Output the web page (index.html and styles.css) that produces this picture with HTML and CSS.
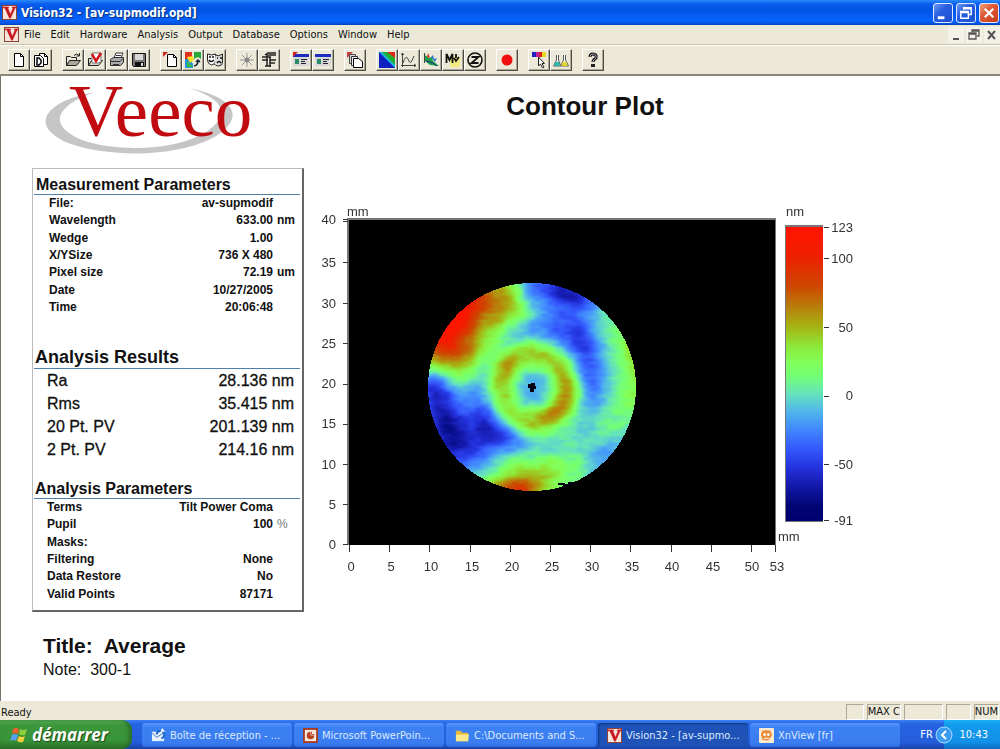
FILE: index.html
```html
<!DOCTYPE html>
<html lang="en">
<head>
  <meta charset="UTF-8">
  <title>Vision32 - [av-supmodif.opd]</title>
  <link rel="stylesheet" href="styles.css">
</head>
<body>

  <svg class="defs" width="0" height="0" aria-hidden="true">
    <symbol id="v-logo" viewBox="0 0 16 16">
      <rect width="16" height="16" fill="#8a3a2a"/>
      <rect x="1" y="1" width="14" height="14" fill="#f4e6dc"/>
      <path d="M1 2h6v1H6l3 7 3-7h-1V2h4v1h-1L9 14H8L3 3H1z" fill="#c8141c" stroke="#c8141c" stroke-width=".6"/>
    </symbol>
    <symbol id="page" viewBox="0 0 16 16">
      <path d="M3.5 1.5h6l3 3v10h-9z" fill="#fff" stroke="#000"/>
      <path d="M9.500 1.500v3h3" fill="none" stroke="#000"/>
    </symbol>
    <symbol id="window-list" viewBox="0 0 16 16">
      <rect x="0" y="2" width="16" height="12" fill="#d8d8d8"/>
      <rect x="0" y="2" width="16" height="3" fill="#1c2cc0"/>
      <rect x="2" y="7" width="4" height="5" fill="#2a8a6a"/>
      <path d="M8 7.500h6M8 9.500h4M8 11.500h5" stroke="#223"/>
    </symbol>
  </svg>

  <header class="titlebar">
    <svg class="app-icon"><use href="#v-logo"/></svg>
    <h1>Vision32 - [av-supmodif.opd]</h1>
    <div class="window-buttons">
      <button type="button" aria-label="Minimize"><svg viewBox="0 0 19 19"><path d="M4 13h7v3H4z" fill="#fff"/></svg></button>
      <button type="button" aria-label="Restore"><svg viewBox="0 0 19 19"><path d="M7 6V4h8v7h-3M7 5h8" fill="none" stroke="#fff" stroke-width="1.500"/><path d="M4 8h8v7H4zM4 9h8" fill="none" stroke="#fff" stroke-width="1.500"/></svg></button>
      <button type="button" class="close" aria-label="Close"><svg viewBox="0 0 19 19"><path d="M5 5l9 9M14 5l-9 9" stroke="#fff" stroke-width="2.300"/></svg></button>
    </div>
  </header>

  <nav class="menubar">
    <svg class="app-icon"><use href="#v-logo"/></svg>
    <button type="button">File</button>
    <button type="button">Edit</button>
    <button type="button">Hardware</button>
    <button type="button">Analysis</button>
    <button type="button">Output</button>
    <button type="button">Database</button>
    <button type="button">Options</button>
    <button type="button">Window</button>
    <button type="button">Help</button>
    <div class="doc-buttons">
      <button type="button" aria-label="Minimize document"><svg viewBox="0 0 16 16"><path d="M5 12h6" stroke="#555" stroke-width="2"/></svg></button>
      <button type="button" aria-label="Restore document"><svg viewBox="0 0 16 16"><path d="M6 5V3h7v6h-2M6 4h7M3 6h7v6H3zM3 7h7" fill="none" stroke="#555" stroke-width="1.300"/></svg></button>
      <button type="button" aria-label="Close document"><svg viewBox="0 0 16 16"><path d="M4 4l7 8M11 4l-7 8" stroke="#555" stroke-width="2"/></svg></button>
    </div>
  </nav>

  <div class="toolbar">
    <div class="group">
      <button type="button" aria-label="New"><svg><use href="#page"/></svg></button>
      <button type="button" aria-label="Duplicate"><svg viewBox="0 0 16 16"><path d="M6.500 1.500h5l3 3v8h-8z" fill="#fff" stroke="#000"/><path d="M11.500 1.500v3h3" fill="none" stroke="#000"/><path d="M1.500 3.500h6l3 3v8h-9z" fill="#fff" stroke="#000"/><path d="M4 6h2l2 2v3l-2 2H4z" fill="none" stroke="#000" stroke-width="1.500"/></svg></button>
    </div>
    <div class="group">
      <button type="button" aria-label="Open"><svg viewBox="0 0 16 16"><path d="M1.500 13.500v-9h4l1 1h5v3" fill="#e8e8dc" stroke="#222"/><path d="M1.500 13.500l3-5h11l-4 5z" fill="#a8a89c" stroke="#222"/><path d="M9 3.500q3-3 5 0M14.500 1v3h-3" fill="none" stroke="#222"/></svg></button>
      <button type="button" aria-label="Open dataset"><svg viewBox="0 0 16 16"><path d="M1.500 13.500v-7h3M1.500 13.500l3-5h11l-4 5z" fill="#d8d8cc" stroke="#222"/><path d="M5 1h9v9l-3 1H5z" fill="#fff" stroke="#777"/><path d="M5 2l4 7 5-8" fill="none" stroke="#d01418" stroke-width="2.500"/></svg></button>
      <button type="button" aria-label="Print"><svg viewBox="0 0 16 16"><path d="M5 6l2-5h7l-2 5" fill="#fff" stroke="#333"/><path d="M1.500 7.500l3-2h10v5l-3 3h-10z" fill="#aaa" stroke="#333"/><path d="M2 9.500h9l3-3M4 12.500h6M7 3.500h5" fill="none" stroke="#333"/></svg></button>
      <button type="button" aria-label="Save"><svg viewBox="0 0 16 16"><path d="M1.500 1.500h13v13h-12l-1-1z" fill="#777" stroke="#111"/><rect x="4" y="2" width="8" height="6" fill="#d8d8d8"/><rect x="4" y="10" width="9" height="4" fill="#111"/><rect x="10" y="11" width="2" height="3" fill="#ddd"/></svg></button>
    </div>
    <div class="group">
      <button type="button" aria-label="New measurement"><svg viewBox="0 0 16 16"><path d="M4.500 2.500h6l3 3v9h-9z" fill="#fff" stroke="#000"/><path d="M10.500 2.500v3h3" fill="none" stroke="#000"/><path d="M0 0h5L0 5z" fill="#d02020"/></svg></button>
      <button type="button" aria-label="Process data"><svg viewBox="0 0 16 16"><rect width="7" height="7" fill="#e03020"/><path d="M9 0h7v7l-3-2-4 2z" fill="#28a838"/><path d="M0 7h5l3 5v4H0z" fill="#2890d8"/><path d="M2 5l6-1 1 4-4 3z" fill="#f8e028"/><path d="M2 9l6 6H2z" fill="#30c040"/><path d="M9 14q4-1 4-5M11 10l2-2 2 2" fill="none" stroke="#123" stroke-width="1.500"/></svg></button>
      <button type="button" aria-label="Masks"><svg viewBox="0 0 16 16"><path d="M0.500 2q4 2 8 0v7q-1 4-4 4-4-1-4-5z" fill="#fff" stroke="#222"/><path d="M8.500 3q3 2 7-1v8q0 4-4 4-3 0-4-2" fill="#ddd" stroke="#222"/><path d="M2 5h2M5 5h2M2 8q2 3 5 0M10 6h1M13 6h2M10 11q2-3 4 0" stroke="#111" fill="none" stroke-width="1.500"/></svg></button>
    </div>
    <div class="group">
      <button type="button" aria-label="Intensity"><svg viewBox="0 0 16 16"><path d="M8 1v14M1 8h14M3 3l10 10M13 3L3 13" stroke="#999"/><circle cx="8" cy="8" r="2.500" fill="#888"/></svg></button>
      <button type="button" aria-label="Stage"><svg viewBox="0 0 16 16"><path d="M4 3l3-2h8M7 3h8M1 5h9M1 8h6M9 8h6M6 2v12M9 5v10M4 14h6M9 11h5" fill="none" stroke="#222" stroke-width="1.500"/></svg></button>
    </div>
    <div class="group">
      <button type="button" aria-label="Measurement options"><svg viewBox="0 0 16 16"><use href="#window-list"/><path d="M0 0h5L0 5z" fill="#d02020"/></svg></button>
      <button type="button" aria-label="Analysis options"><svg><use href="#window-list"/></svg></button>
    </div>
    <div class="group">
      <button type="button" aria-label="Copy plots"><svg viewBox="0 0 16 16"><path d="M0 0h6L0 6z" fill="#c84040"/><path d="M2.500 2.500h6v9h-6z" fill="#ddd" stroke="#444"/><path d="M4.500 4.500h6v9h-6z" fill="#eee" stroke="#333"/><path d="M6.500 6.500h5l4 3v6h-9z" fill="#fff" stroke="#000"/></svg></button>
    </div>
    <div class="group">
      <button type="button" aria-label="Contour plot"><svg viewBox="0 0 16 16"><rect width="16" height="16" fill="#1020c0"/><path d="M0 0h16v16z" fill="#18b8d8"/><path d="M3 0h13v13z" fill="#20b030"/><path d="M8 0h8v6z" fill="#e02818"/></svg></button>
      <button type="button" aria-label="Profile plot"><svg viewBox="0 0 16 16"><path d="M1.500 15V1M0 13.500h15M0 3l1.500-2L3 3M13 12l2 1.500-2 1.500" fill="none" stroke="#444"/><path d="M2 11q3-9 5-4t3 3q1-1 3-6" fill="none" stroke="#444"/></svg></button>
      <button type="button" aria-label="3D plot"><svg viewBox="0 0 16 16"><path d="M2 3l4 3 3-1 1 4 6 5-9-1-5-4z" fill="#20a048"/><path d="M5 1l2 5-3-1z" fill="#d03020"/><path d="M8 5l2-2 1 4 3-1-2 4z" fill="#2878c8"/><path d="M3 9l7 2 4 3" stroke="#102890" fill="none"/><path d="M1.500 1v10" stroke="#444"/></svg></button>
      <button type="button" aria-label="Multiple region"><svg viewBox="0 0 16 16"><rect x="5" y="5" width="10" height="10" fill="#f4ee80"/><path d="M1.500 11V2l3 6 3-6v9M11 2v4M9 6l2 3 3-4" fill="none" stroke="#111" stroke-width="1.800"/></svg></button>
      <button type="button" aria-label="Zernike"><svg viewBox="0 0 16 16"><circle cx="8" cy="8" r="7" fill="none" stroke="#111" stroke-width="1.600"/><path d="M4.500 5h7l-7 6h7" fill="none" stroke="#111" stroke-width="1.800"/></svg></button>
    </div>
    <div class="group">
      <button type="button" aria-label="Record"><svg viewBox="0 0 16 16"><circle cx="8" cy="8" r="5.500" fill="#f01010"/></svg></button>
    </div>
    <div class="group">
      <button type="button" aria-label="Color palette"><svg viewBox="0 0 16 16"><rect x="1" width="4" height="5" fill="#2020c0"/><rect x="5" width="3" height="5" fill="#c020a0"/><rect x="8" width="3" height="5" fill="#d82020"/><rect x="11" width="4" height="5" fill="#e8d820"/><path d="M7.500 5v9l2-2 2 4 1.500-1-2-3.500h2.500z" fill="#fff" stroke="#222"/></svg></button>
      <button type="button" aria-label="Lab"><svg viewBox="0 0 16 16"><path d="M3.500 3v5l-3 6h7l-2-6V3" fill="#fff" stroke="#555"/><path d="M2 10h4l1 4H1z" fill="#30b8b0"/><path d="M10.500 3v5l-3 6h8l-3-6V3" fill="#fff" stroke="#555"/><path d="M9.500 10h4l1 4h-6z" fill="#e0d828"/></svg></button>
    </div>
    <div class="group">
      <button type="button" aria-label="Help"><svg viewBox="0 0 16 16"><path d="M5 5q0-3 3-3 4 0 3 4-3 2-3 4" fill="none" stroke="#111" stroke-width="3"/><path d="M5 5q0-3 3-3 4 0 3 4-3 2-3 4" fill="none" stroke="#aaa"/><rect x="6" y="12" width="4" height="3" fill="#222"/></svg></button>
    </div>
  </div>

  <main class="document">
    <section class="report">
      <svg class="veeco" viewBox="0 0 220 74" role="img" aria-label="Veeco">
        <path d="M50 8C-4 18-16 44 26 60c44 15 112 12 145-8 28-17 22-38-27-48 38 12 41 28 17 44-29 18-86 21-124 8C2 41 10 22 50 8z" fill="#c6c6c6"/>
        <text x="24" y="52">Veeco</text>
      </svg>

      <div class="panel">
        <h2>Measurement Parameters</h2>
        <table class="params measurement">
          <tr><th scope="row">File:</th><td>av-supmodif</td><td></td></tr>
          <tr><th scope="row">Wavelength</th><td>633.00</td><td>nm</td></tr>
          <tr><th scope="row">Wedge</th><td>1.00</td><td></td></tr>
          <tr><th scope="row">X/YSize</th><td>736 X 480</td><td></td></tr>
          <tr><th scope="row">Pixel size</th><td>72.19</td><td>um</td></tr>
          <tr><th scope="row">Date</th><td>10/27/2005</td><td></td></tr>
          <tr><th scope="row">Time</th><td>20:06:48</td><td></td></tr>
        </table>

        <h2 class="results-title">Analysis Results</h2>
        <table class="results">
          <tr><th scope="row">Ra</th><td>28.136 nm</td></tr>
          <tr><th scope="row">Rms</th><td>35.415 nm</td></tr>
          <tr><th scope="row">20 Pt. PV</th><td>201.139 nm</td></tr>
          <tr><th scope="row">2 Pt. PV</th><td>214.16 nm</td></tr>
        </table>

        <h2 class="analysis-title">Analysis Parameters</h2>
        <table class="params">
          <tr><th scope="row">Terms</th><td>Tilt Power Coma</td><td></td></tr>
          <tr><th scope="row">Pupil</th><td>100</td><td class="percent">%</td></tr>
          <tr><th scope="row">Masks:</th><td></td><td></td></tr>
          <tr><th scope="row">Filtering</th><td>None</td><td></td></tr>
          <tr><th scope="row">Data Restore</th><td>No</td><td></td></tr>
          <tr><th scope="row">Valid Points</th><td>87171</td><td></td></tr>
        </table>
      </div>

      <p class="plot-title">Title:&nbsp; Average</p>
      <p class="plot-note">Note:&nbsp; 300-1</p>
    </section>

    <section class="plot">
      <h2>Contour Plot</h2>
      <svg class="chart" viewBox="0 0 560 380">
        <defs>
          <linearGradient id="scale" x1="0" y1="0" x2="0" y2="1">
            <stop offset="0" stop-color="#ff1400"/>
            <stop offset=".1" stop-color="#ee2000"/>
            <stop offset=".2" stop-color="#cd4600"/>
            <stop offset=".27" stop-color="#b97d0a"/>
            <stop offset=".34" stop-color="#a5b414"/>
            <stop offset=".41" stop-color="#8ceb3c"/>
            <stop offset=".46" stop-color="#82ff5a"/>
            <stop offset=".51" stop-color="#73ff78"/>
            <stop offset=".57" stop-color="#64e1be"/>
            <stop offset=".63" stop-color="#50b4eb"/>
            <stop offset=".69" stop-color="#4187ff"/>
            <stop offset=".76" stop-color="#3255fa"/>
            <stop offset=".82" stop-color="#2332dc"/>
            <stop offset=".88" stop-color="#1419aa"/>
            <stop offset=".95" stop-color="#000573"/>
            <stop offset="1" stop-color="#00006e"/>
          </linearGradient>
        </defs>

        <rect x="37" y="18" width="429" height="327" fill="#777"/>
        <rect x="39" y="20" width="426" height="325"/>
        <foreignObject x="117" y="82" width="210" height="210">
          <canvas id="surface" width="210" height="210"></canvas>
        </foreignObject>

        <path class="ticks" d="M33 19.500h5M33 21.500h5M33 62.500h5M33 103.500h5M33 143.500h5M33 184.500h5M33 224.500h5M33 264.500h5M33 304.500h5M33 344.500h5"/>
        <g class="y-labels">
          <text x="26" y="24">40</text>
          <text x="26" y="67">35</text>
          <text x="26" y="108">30</text>
          <text x="26" y="148">25</text>
          <text x="26" y="188">20</text>
          <text x="26" y="228">15</text>
          <text x="26" y="269">10</text>
          <text x="26" y="309">5</text>
          <text x="26" y="349">0</text>
        </g>

        <path class="ticks" d="M39.500 345v7M79.500 345v7M119.500 345v7M160.500 345v7M200.500 345v7M240.500 345v7M280.500 345v7M320.500 345v7M361.500 345v7M401.500 345v7M441.500 345v7M465.500 345v7"/>
        <g class="x-labels">
          <text x="41" y="371">0</text>
          <text x="81" y="371">5</text>
          <text x="121" y="371">10</text>
          <text x="162" y="371">15</text>
          <text x="202" y="371">20</text>
          <text x="242" y="371">25</text>
          <text x="282" y="371">30</text>
          <text x="322" y="371">35</text>
          <text x="362" y="371">40</text>
          <text x="403" y="371">45</text>
          <text x="442" y="371">50</text>
          <text x="467" y="371">53</text>
        </g>
        <text x="37" y="16">mm</text>
        <text x="468" y="341">mm</text>

        <text x="476" y="16">nm</text>
        <rect x="475" y="25" width="38" height="297" fill="#777"/>
        <rect x="476" y="27" width="37" height="294" fill="url(#scale)"/>
        <path class="ticks" d="M514 27.500h5M514 58.500h5M514 127.500h5M514 196.500h5M514 264.500h5M514 320.500h5"/>
        <g class="y-labels">
          <text x="543" y="32">123</text>
          <text x="543" y="63">100</text>
          <text x="543" y="132">50</text>
          <text x="543" y="200">0</text>
          <text x="543" y="269">-50</text>
          <text x="543" y="325">-91</text>
        </g>
      </svg>
    </section>
  </main>

  <footer class="statusbar">
    <span class="message">Ready</span>
    <span class="cell small"></span>
    <span class="cell">MAX C</span>
    <span class="cell wide"></span>
    <span class="cell medium"></span>
    <span class="cell">NUM</span>
  </footer>

  <div class="taskbar">
    <button type="button" class="start">
      <svg viewBox="0 0 18 18"><path d="M3 3q3-2 6 0L8 8q-3-2-6 0z" fill="#f0602c"/><path d="M10 3q3 2 7 0l-2 6q-3 1-6-1z" fill="#8cd03c"/><path d="M2 9q3-2 6 0l-2 6q-3-2-6 0z" fill="#58a0f0"/><path d="M9 10q3 2 6 0l-2 6q-3 1-6-1z" fill="#fcd038"/></svg>
      démarrer
    </button>
    <div class="tasks">
      <button type="button"><svg viewBox="0 0 16 16"><rect x="1" y="4" width="13" height="10" fill="#e8f2ff"/><path d="M1 5l5 5 8-5" fill="none" stroke="#3870c0"/><path d="M6 7a4 4 0 1 1 5 4" fill="none" stroke="#1868c8" stroke-width="2"/><path d="M12 0l3 4h-5z" fill="#fff"/></svg><span>Boîte de réception - ...</span></button>
      <button type="button"><svg viewBox="0 0 16 16"><rect x="0" y="0" width="16" height="16" fill="#a83c20"/><rect x="2" y="2" width="12" height="12" fill="#fbe8dc"/><path d="M8 4a4 4 0 1 0 4 4H8z" fill="#b84020"/><path d="M9 4v3h3" fill="none" stroke="#b84020"/></svg><span>Microsoft PowerPoin...</span></button>
      <button type="button"><svg viewBox="0 0 16 16"><path d="M1 3h5l2 2h6v9H1z" fill="#e8b83c"/><path d="M1 7h14l-1 7H1z" fill="#fce88c"/></svg><span>C:\Documents and S...</span></button>
      <button type="button" class="active"><svg><use href="#v-logo"/></svg><span>Vision32 - [av-supmo...</span></button>
      <button type="button"><svg viewBox="0 0 16 16"><rect width="16" height="16" rx="1" fill="#fbe8d0"/><path d="M3 5q0-3 3-2 2-2 3 0 4-1 4 2 2 3-1 5-1 4-5 3-5 0-4-4-2-2 0-4z" fill="#e88a38"/><circle cx="6" cy="7" r="1.500" fill="#fff"/><circle cx="10" cy="7" r="1.500" fill="#fff"/><path d="M5 11h6" stroke="#fff"/></svg><span>XnView [fr]</span></button>
    </div>
    <span class="language">FR</span>
    <div class="tray">
      <button type="button" aria-label="Show hidden icons"><svg viewBox="0 0 18 18"><circle cx="9" cy="9" r="8" fill="#3a9cf0" stroke="#a8dcff"/><path d="M11 5L7 9l4 4" fill="none" stroke="#fff" stroke-width="2"/></svg></button>
      <time>10:43</time>
    </div>
  </div>

  <script src="surface.js"></script>
</body>
</html>
```
FILE: styles.css
```css
* {
  box-sizing: border-box;
}

body {
  margin: 0;
  min-height: 100vh;
  display: flex;
  flex-direction: column;
  background: #ece9d8;
  color: #111;
  font-family: "DejaVu Sans Condensed", "Noto Sans", sans-serif;
  font-size: 11px;
}

h1,
h2,
p {
  margin: 0;
}

button {
  margin: 0;
  padding: 0;
  border: none;
  background: none;
  color: inherit;
  font: inherit;
}

svg {
  display: block;
}

.defs {
  position: absolute;
}

.app-icon {
  width: 15px;
  height: 15px;
}

/* title bar */
.titlebar {
  display: flex;
  align-items: center;
  gap: 4px;
  height: 25px;
  padding: 0 1px 0 2px;
  background: linear-gradient(#2a8cff 0, #0a5cec 4px, #0054e3 10px, #0862fa 20px, #0458ea 23px, #0340b8 25px);
  color: #fff;
}

.titlebar h1 {
  flex: 1;
  font-size: 12px;
  text-shadow: 1px 1px 1px #0a2f80;
}

.window-buttons {
  display: flex;
  gap: 3px;
}

.window-buttons button {
  width: 20px;
  height: 20px;
  border: 1px solid #dce8fc;
  border-radius: 3px;
  background: linear-gradient(135deg, #6b98f4, #2a5fe0 40%, #1c4fd0);
}

.window-buttons .close {
  background: linear-gradient(135deg, #f0a080, #e05a38 40%, #c83c18);
}

/* menu */
.menubar {
  display: flex;
  align-items: center;
  height: 20px;
  padding-left: 4px;
  border-bottom: 1px solid #c8c5b4;
}

.menubar > button {
  padding: 0 5px;
}

.doc-buttons {
  display: flex;
  gap: 2px;
  margin-left: auto;
}

.doc-buttons button {
  width: 16px;
  height: 16px;
  background: #f4f2e8;
}

/* toolbar */
.toolbar {
  display: flex;
  gap: 10px;
  height: 31px;
  padding: 3px 8px;
  border-top: 1px solid #fff;
  border-bottom: 2px solid #8a877a;
}

.group {
  display: flex;
}

.group button {
  display: grid;
  place-items: center;
  width: 22px;
  height: 22px;
  border: 1px solid;
  border-color: #fff #4e4c44 #4e4c44 #fff;
  box-shadow: inset -1px -1px 0 #aca899;
}

.group svg {
  width: 16px;
  height: 16px;
}

/* document */
.document {
  flex: 1;
  display: grid;
  grid-template-columns: 309px 1fr;
  background: #fff;
  border-left: 1px solid #777468;
  font-family: "Liberation Sans", Arial, sans-serif;
}

.report {
  padding: 8px 6px 0 31px;
}

.veeco {
  width: 220px;
  height: 74px;
  margin-left: 13px;
  overflow: visible;
}

.veeco text {
  font-family: "Liberation Serif", serif;
  font-size: 75px;
  fill: #c00c10;
}

.panel {
  margin-top: 10px;
  padding: 6px 2px 7px 1px;
  border: 1px solid #bbb;
  border-right: 2px solid #666;
  border-bottom: 2px solid #666;
}

.panel h2 {
  padding-left: 2px;
  border-bottom: 1px solid #5080a8;
  font-size: 16px;
  line-height: 19px;
}

.panel .results-title {
  margin-top: 31px;
  padding-left: 1px;
  font-size: 18px;
  line-height: 21px;
}

.panel .analysis-title {
  margin-top: 18px;
  padding-left: 1px;
}

table {
  width: 100%;
  border-collapse: collapse;
}

th,
td {
  padding: 0;
  text-align: right;
}

th {
  text-align: left;
}

.params {
  height: 104px;
  font-size: 12px;
  font-weight: bold;
  line-height: 17px;
}

.params th {
  padding-left: 13px;
}

.params td:last-child {
  width: 27px;
  padding-left: 4px;
  text-align: left;
}

.params .percent {
  color: #777;
  font-weight: normal;
}

.measurement {
  height: 121px;
}

.measurement th {
  padding-left: 15px;
}

.results {
  font-size: 16px;
  line-height: 23px;
}

.results th {
  padding-left: 13px;
  font-weight: normal;
}

.results td {
  padding-right: 6px;
}

.results th,
.results td {
  -webkit-text-stroke: 0.3px #111;
}

.plot-title {
  margin: 22px 0 0 11px;
  font-size: 21px;
  font-weight: bold;
  line-height: 24px;
}

.plot-note {
  margin-left: 11px;
  font-size: 16px;
  line-height: 24px;
}

/* contour plot */
.plot h2 {
  max-width: 550px;
  padding-top: 14px;
  font-size: 26px;
  line-height: 32px;
  text-align: center;
}

.chart {
  width: 100%;
  max-width: 560px;
  margin-top: 78px;
}

.chart text {
  fill: #333;
  font-size: 13px;
}

.y-labels text {
  text-anchor: end;
}

.x-labels text {
  text-anchor: middle;
}

.ticks {
  stroke: #333;
}

#surface {
  display: block;
}

/* status bar */
.statusbar {
  display: flex;
  align-items: center;
  gap: 3px;
  height: 19px;
  padding: 3px 1px 0;
}

.message {
  flex: 1;
}

.cell {
  height: 16px;
  border: 1px solid;
  border-color: #aca899 #fff #fff #aca899;
}

.small {
  width: 18px;
}

.wide {
  width: 39px;
}

.medium {
  width: 25px;
}

/* taskbar */
.taskbar {
  display: flex;
  height: 29px;
  background: linear-gradient(#3a80f4 0, #2663e0 4px, #245edb 22px, #1941a5 29px);
  color: #fff;
}

.start {
  display: flex;
  align-items: center;
  gap: 4px;
  width: 132px;
  padding-left: 10px;
  border-radius: 0 10px 10px 0;
  background: linear-gradient(#5cb85c 0, #3c963c 5px, #389438 20px, #2a702a 29px);
  box-shadow: inset -3px 0 4px #2a6c2a;
  font-family: "Open Sans", "Noto Sans", sans-serif;
  font-size: 17px;
  font-style: italic;
  font-weight: bold;
  text-shadow: 1px 1px 1px #1c4c1c;
}

.start svg {
  width: 18px;
  height: 18px;
}

.tasks {
  flex: 1;
  display: flex;
  gap: 2px;
  padding: 3px 0 2px 10px;
}

.tasks button {
  flex: 1;
  display: flex;
  align-items: center;
  gap: 4px;
  max-width: 150px;
  padding-left: 9px;
  border-radius: 3px;
  background: linear-gradient(#5a98fc 0, #3c81f3 4px, #3a7cf0 20px, #2f6ae0 24px);
  color: #dceaff;
  white-space: nowrap;
}

.tasks .active {
  background: #1e52b7;
  box-shadow: inset 1px 1px 2px #123880;
}

.tasks svg {
  flex: none;
  width: 15px;
  height: 15px;
}

.language {
  width: 36px;
  line-height: 29px;
  text-align: center;
}

.tray {
  display: flex;
  align-items: center;
  gap: 6px;
  padding-right: 12px;
  background: linear-gradient(#1cb0f4 0, #129bec 5px, #1290e8 22px, #0e6cc0 29px);
}

.tray button {
  width: 18px;
  height: 18px;
  margin-left: -9px;
}
```
FILE: surface.js
```javascript
// height map of the measured pupil, 0 = lowest, 1 = highest
const canvas = document.getElementById('surface');
const ctx = canvas.getContext('2d');
const size = canvas.width;
const radius = 104;

const stops = [
  [0, 0, 0, 110], [0.05, 0, 5, 115], [0.12, 20, 25, 170], [0.18, 35, 50, 220],
  [0.24, 50, 85, 250], [0.31, 65, 135, 255], [0.37, 80, 180, 235], [0.43, 100, 225, 190],
  [0.49, 115, 255, 120], [0.54, 130, 255, 90], [0.59, 140, 235, 60], [0.66, 165, 180, 20],
  [0.73, 185, 125, 10], [0.8, 205, 70, 0], [0.9, 238, 32, 0], [1, 255, 20, 0]
];

// x, y, sigma x, sigma y, amplitude, rotation (degrees)
const bumps = [
  [-86, -74, 38, 20, 0.75, -51],
  [-54, -56, 46, 17, 0.2, -51],
  [-76, -34, 20, 10, 0.14, -10],
  [-26, -84, 13, 24, 0.15, 20],
  [-10, -72, 14, 16, 0.08, 0],
  [-17, 106, 24, 12, 0.4, 0],
  [8, 84, 54, 17, 0.21, 0],
  [104, -38, 9, 34, 0.17, -10],
  [84, -50, 18, 32, 0.13, -20],
  [74, 32, 28, 26, 0.14, 0],
  [100, 5, 12, 26, 0.08, 0],
  [-75, -16, 17, 12, 0.1, 0],
  [36, -93, 18, 10, -0.24, 15],
  [-3, -97, 11, 8, -0.13, 0],
  [-90, 28, 13, 34, -0.21, -15],
  [-98, 0, 12, 12, -0.12, 0],
  [-48, 34, 15, 18, -0.14, 0],
  [-62, 64, 24, 13, -0.14, 35],
  [-30, 50, 19, 9, -0.13, 20],
  [57, -22, 11, 28, -0.14, -15],
  [38, -54, 18, 12, -0.09, 30],
  [-4, -57, 24, 9, -0.07, 0],
  [58, 20, 12, 16, -0.06, 0],
  [70, 72, 20, 10, -0.13, -40],
  [-26, -22, 8, 10, 0.07, 30],
  [34, 2, 7, 14, 0.06, 0],
  [16, 28, 14, 7, 0.06, -30]
];

function color(h) {
  h = Math.max(0, Math.min(1, h));
  let i = 1;
  while (i < stops.length - 1 && h > stops[i][0]) i++;
  const a = stops[i - 1];
  const b = stops[i];
  const t = (h - a[0]) / (b[0] - a[0]);
  return [1, 2, 3].map(k => a[k] + (b[k] - a[k]) * t);
}

function random(x, y) {
  const s = Math.sin(x * 127.1 + y * 311.7) * 43758.5453;
  return s - Math.floor(s);
}

function noise(x, y) {
  const ix = Math.floor(x);
  const iy = Math.floor(y);
  let fx = x - ix;
  let fy = y - iy;
  fx = fx * fx * (3 - 2 * fx);
  fy = fy * fy * (3 - 2 * fy);
  const top = random(ix, iy) * (1 - fx) + random(ix + 1, iy) * fx;
  const bottom = random(ix, iy + 1) * (1 - fx) + random(ix + 1, iy + 1) * fx;
  return top * (1 - fy) + bottom * fy - 0.5;
}

function height(x, y) {
  let h = 0.34;
  for (const [cx, cy, sx, sy, amp, deg] of bumps) {
    const a = deg * Math.PI / 180;
    const dx = x - cx;
    const dy = y - cy;
    const u = (dx * Math.cos(a) + dy * Math.sin(a)) / sx;
    const v = (dy * Math.cos(a) - dx * Math.sin(a)) / sy;
    h += amp * Math.exp(-(u * u + v * v) / 2);
  }
  const ring = (Math.hypot(x - 2, (y - 1) * 0.96) - 32) / 11;
  h += 0.28 * Math.exp(-ring * ring / 2);
  return h + noise(x / 6 + 50, y / 3 + 50) * 0.04 + noise(x / 12 + 90, y / 8 + 90) * 0.05;
}

const image = ctx.createImageData(size, size);
for (let py = 0; py < size; py++) {
  for (let px = 0; px < size; px++) {
    const x = px - size / 2 + 0.5;
    const y = py - size / 2 + 0.5;
    if (Math.hypot(x, y) > radius) continue;
    const [r, g, b] = color(height(x, y));
    image.data.set([r, g, b, 255], (py * size + px) * 4);
  }
}
ctx.putImageData(image, 0, 0);

// missing data points
ctx.fillStyle = '#000010';
ctx.fillRect(101, 102, 5, 4);
ctx.fillRect(104, 101, 4, 5);
ctx.fillRect(105, 104, 4, 3);
ctx.fillRect(103, 106, 4, 4);
ctx.fillRect(131, 201, 7, 2);
ctx.fillRect(136, 202, 10, 2);
ctx.fillRect(141, 200, 6, 2);
```
